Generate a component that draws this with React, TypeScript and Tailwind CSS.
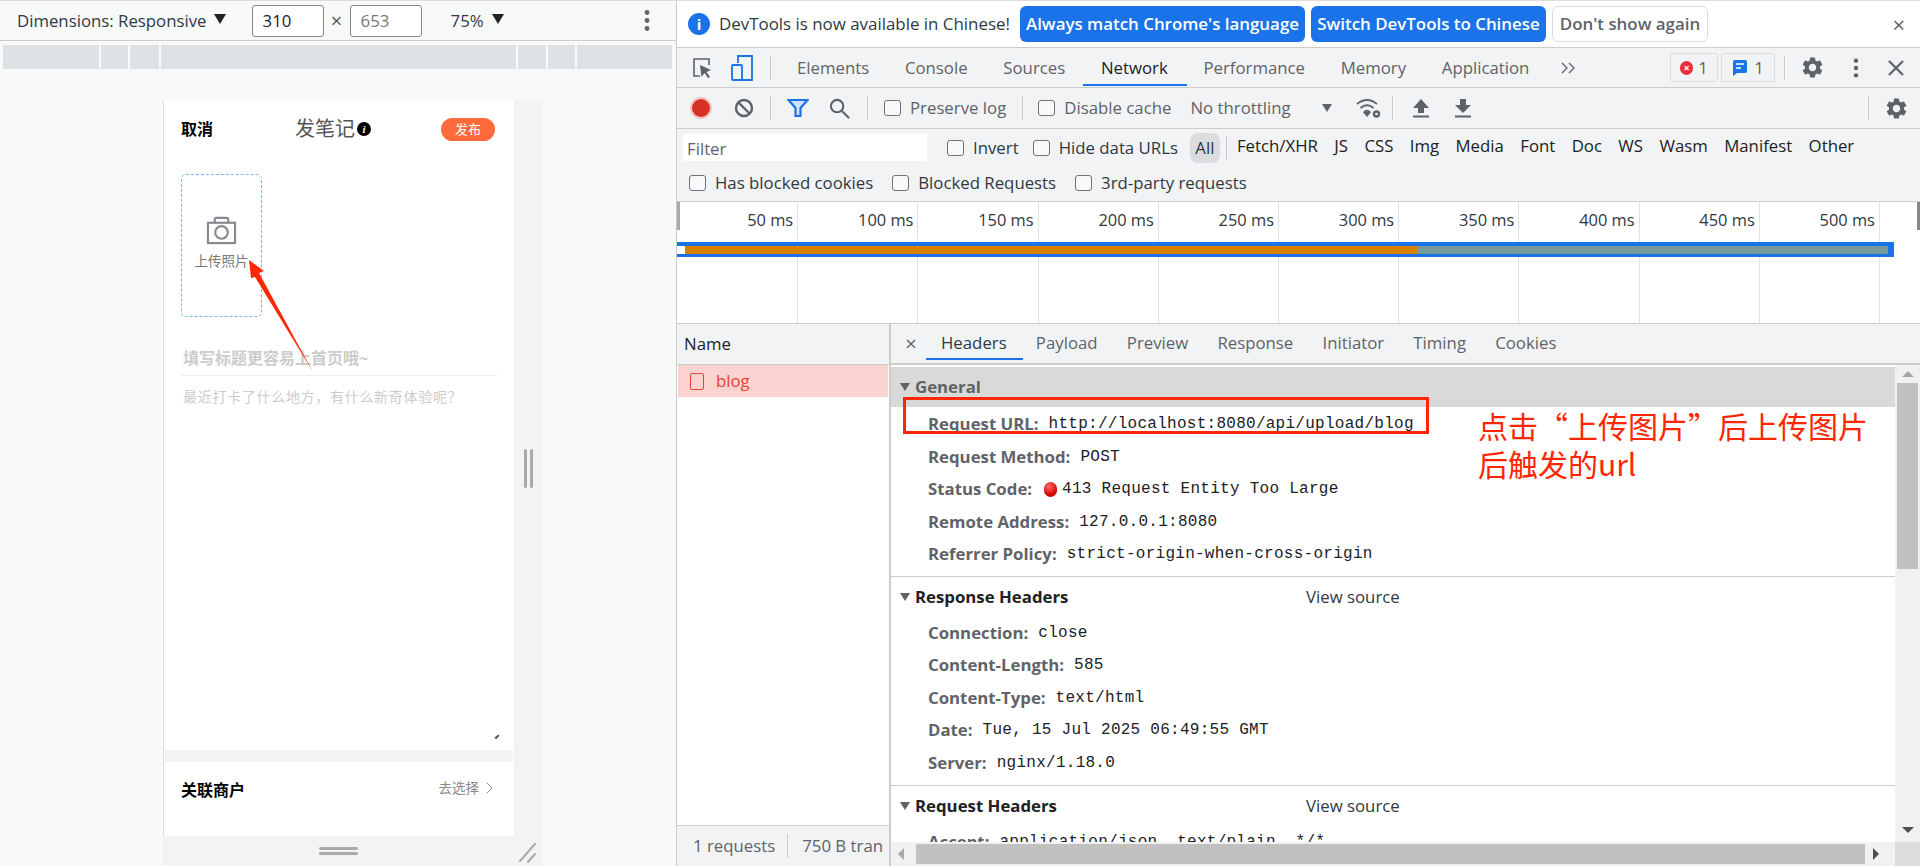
import React from "react";

const ui = "font-['Open_Sans','Noto_Sans_CJK_SC',sans-serif]";
const mono = "font-['Liberation_Mono',monospace]";
const gearPath =
  "M19.14 12.94c.04-.3.06-.61.06-.94 0-.32-.02-.64-.07-.94l2.03-1.58a.49.49 0 0 0 .12-.61l-1.92-3.32a.488.488 0 0 0-.59-.22l-2.39.96c-.5-.38-1.03-.7-1.62-.94l-.36-2.54a.484.484 0 0 0-.48-.41h-3.84c-.24 0-.43.17-.47.41l-.36 2.54c-.59.24-1.13.57-1.62.94l-2.39-.96c-.22-.08-.47 0-.59.22L2.74 8.87c-.12.21-.08.47.12.61l2.03 1.58c-.05.3-.09.63-.09.94s.02.64.07.94l-2.03 1.58a.49.49 0 0 0-.12.61l1.92 3.32c.12.22.37.29.59.22l2.39-.96c.5.38 1.03.7 1.62.94l.36 2.54c.05.24.24.41.48.41h3.84c.24 0 .44-.17.47-.41l.36-2.54c.59-.24 1.13-.56 1.62-.94l2.39.96c.22.08.47 0 .59-.22l1.92-3.32c.12-.22.07-.47-.12-.61l-2.01-1.58zM12 15.6c-1.98 0-3.6-1.62-3.6-3.6s1.62-3.6 3.6-3.6 3.6 1.62 3.6 3.6-1.62 3.6-3.6 3.6z";

function Gear({ className }: { className: string }) {
  return (
    <svg viewBox="0 0 24 24" className={className} fill="#5f6368">
      <path d={gearPath} />
    </svg>
  );
}

function Dots({ className }: { className: string }) {
  return (
    <svg viewBox="0 0 6 24" className={className} fill="#5f6368">
      <circle cx="3" cy="4" r="2.4" />
      <circle cx="3" cy="12" r="2.4" />
      <circle cx="3" cy="20" r="2.4" />
    </svg>
  );
}

function Check({ label, className = "" }: { label: string; className?: string }) {
  return (
    <span className={`flex items-center gap-[9px] ${className}`}>
      <span className="w-[17px] h-[16px] rounded-[3px] border-[1.5px] border-[#6e7175] bg-[#f8f9fa]" />
      <span>{label}</span>
    </span>
  );
}

function Sep({ className }: { className: string }) {
  return <span className={`w-px h-[24px] bg-[#ccc] ${className}`} />;
}

function Row({ name, value, status }: { name: string; value: string; status?: boolean }) {
  return (
    <div className="h-[32.5px] flex items-center pl-[37px] whitespace-nowrap">
      <span className="font-bold text-[#5f6368] -mt-[1px]">{name}</span>
      {status && (
        <span className="ml-[12px] w-[13px] h-[15px] rounded-full bg-[radial-gradient(circle_at_40%_30%,#ff6b6b,#d30000_65%)]" />
      )}
      <span className={`${mono} ${status ? "ml-[5px]" : "ml-[10px]"} text-[16px] tracking-[0.27px] text-[#202124]`}>
        {value}
      </span>
    </div>
  );
}

function SectionHead({ title, source }: { title: string; source?: boolean }) {
  return (
    <div className="h-[40px] flex items-center pl-[9px] whitespace-nowrap">
      <span className="w-0 h-0 border-x-[5px] border-x-transparent border-t-[8px] border-t-[#5f6368]" />
      <span className="ml-[5px] w-[391px] font-bold text-[#202124]">{title}</span>
      {source && <span className="text-[#303942]">View source</span>}
    </div>
  );
}

const ticks = ["50 ms", "100 ms", "150 ms", "200 ms", "250 ms", "300 ms", "350 ms", "400 ms", "450 ms", "500 ms"];

function LeftPane() {
  return (
    <div className="w-[677px] shrink-0 h-full flex flex-col bg-[#f8f9f9] border-r border-[#ccc] border-t border-t-[#ddd] text-[#303942]">
      <div className="h-[40px] shrink-0 border-b border-[#ccc] flex items-center pl-[17px] text-[16.8px]">
        <span className="whitespace-nowrap">Dimensions: Responsive</span>
        <span className="ml-[7px] w-0 h-0 border-x-[6px] border-x-transparent border-t-[10px] border-t-[#222] mb-[3px]" />
        <span className="ml-[26px] w-[72px] h-[32px] border border-[#888] rounded-[3px] bg-white pl-[10px] leading-[30px] text-[#222]">
          310
        </span>
        <span className="w-[26px] text-center text-[20px] text-[#555]">×</span>
        <span className="w-[72px] h-[32px] border border-[#888] rounded-[3px] bg-white pl-[10px] leading-[30px] text-[#777]">
          653
        </span>
        <span className="ml-[29px]">75%</span>
        <span className="ml-[8px] w-0 h-0 border-x-[6px] border-x-transparent border-t-[10px] border-t-[#222] mb-[3px]" />
        <Dots className="ml-[140px] w-[6px] h-[25px]" />
      </div>
      <div className="mt-[4px] ml-[3px] w-[669px] h-[24px] shrink-0 flex gap-[2px]">
        <span className="w-[96px] bg-[#dee1e6]" />
        <span className="w-[27px] bg-[#dee1e6]" />
        <span className="w-[29px] bg-[#dee1e6]" />
        <span className="w-[355px] bg-[#dee1e6]" />
        <span className="w-[28px] bg-[#dee1e6]" />
        <span className="w-[27px] bg-[#dee1e6]" />
        <span className="flex-1 bg-[#dee1e6]" />
      </div>
      <div className="mt-[32px] ml-[163px] w-[379px] flex-1 flex flex-col min-h-0">
        <div className="flex-1 flex min-h-0">
          <div className="w-[351px] bg-white border-l border-[#ddd] flex flex-col">
            <div className="flex items-center h-[54px] pl-[17px] pr-[19px] mt-[1px]">
              <span className="w-[114px] font-bold text-[16px] text-black">取消</span>
              <span className="text-[20px] text-[#555] whitespace-nowrap font-['Liberation_Serif','Noto_Sans_CJK_SC',serif]">
                发笔记
              </span>
              <span className="ml-[2px] w-[14px] h-[14px] rounded-full bg-black text-white text-[11px] leading-[14px] text-center font-bold italic font-['Liberation_Serif',serif]">
                i
              </span>
              <span className="ml-auto w-[54px] h-[23px] rounded-full bg-[#ff6a3a] text-white text-[13px] leading-[23px] text-center">
                发布
              </span>
            </div>
            <div className="ml-[17px] mt-[18px] w-[81px] h-[143px] border border-dashed border-[#76b6f5] rounded-[5px] flex flex-col items-center pt-[41px]">
              <svg viewBox="0 0 32 30" className="w-[31px] h-[29px]" fill="none" stroke="#85888f" strokeWidth="2.2">
                <rect x="2" y="7" width="28" height="21" />
                <path d="M9 7V3.5Q9 2 11 2H21Q23 2 23 3.5V7" />
                <circle cx="16" cy="17" r="6.5" />
              </svg>
              <span className="mt-[6px] text-[13.5px] text-[#777] whitespace-nowrap">上传照片</span>
            </div>
            <div className="mt-[31px] mx-[17px] h-[28px] border-b border-[#eee] pl-[2px] font-bold text-[16px] leading-[20px] text-[#ccc] whitespace-nowrap">
              填写标题更容易上首页哦~
            </div>
            <div className="mt-[10px] pl-[19px] text-[14px] leading-[22px] text-[#ccc] whitespace-nowrap tracking-[0.7px]">
              最近打卡了什么地方，有什么新奇体验呢？
            </div>
            <div className="flex-1 relative">
              <span className="absolute right-[14px] bottom-[10px] text-[7px] leading-none text-[#444]">⬋</span>
            </div>
            <div className="ml-[1px] mr-[1px] h-[12px] bg-[#f3f3f3]" />
            <div className="h-[74px] flex items-center pl-[17px] pr-[21px] pb-[18px]">
              <span className="font-bold text-[16px] text-black">关联商户</span>
              <span className="ml-auto text-[13.5px] text-[#888] mb-[4px]">去选择</span>
              <svg viewBox="0 0 8 14" className="ml-[7px] w-[7px] h-[12px] mb-[4px]" fill="none" stroke="#888" strokeWidth="1.1">
                <path d="M1 1l6 6-6 6" />
              </svg>
            </div>
          </div>
          <div className="flex-1 bg-[#f1f3f4] flex items-center justify-center gap-[3px]">
            <span className="w-[3px] h-[39px] rounded-full bg-[#aaa]" />
            <span className="w-[3px] h-[39px] rounded-full bg-[#aaa]" />
          </div>
        </div>
        <div className="relative h-[30px] bg-[#f1f3f4] flex flex-col items-center pr-[28px] justify-center gap-[2px] shrink-0">
          <span className="w-[39px] h-[3px] rounded-full bg-[#aaa]" />
          <span className="w-[39px] h-[3px] rounded-full bg-[#aaa]" />
          <svg viewBox="0 0 18 20" className="absolute right-[5px] top-[7px] w-[18px] h-[20px]" stroke="#aaa" strokeWidth="2" strokeLinecap="round">
            <path d="M1 18L16 1M9 19L16 11" />
          </svg>
        </div>
      </div>
    </div>
  );
}

function InfoBar() {
  return (
    <div className="h-[48px] shrink-0 bg-white border-t border-[#ddd] border-b border-b-[#ccc] flex items-center whitespace-nowrap text-[16.9px] text-[#303942]">
      <span className="ml-[11px] w-[22px] h-[22px] rounded-full bg-[#1a73e8] text-white text-[15px] leading-[22px] text-center font-bold">
        i
      </span>
      <span className="ml-[9px] w-[301px]">DevTools is now available in Chinese!</span>
      <span className="w-[285px] h-[36px] rounded-[6px] bg-[#1a73e8] text-white font-semibold leading-[36px] text-center">
        Always match Chrome's language
      </span>
      <span className="ml-[6px] w-[235px] h-[36px] rounded-[6px] bg-[#1a73e8] text-white font-semibold leading-[36px] text-center">
        Switch DevTools to Chinese
      </span>
      <span className="ml-[6px] w-[156px] h-[36px] rounded-[6px] border border-[#dadce0] font-semibold text-[#5f6368] leading-[34px] text-center">
        Don't show again
      </span>
      <span className="ml-auto mr-[15px] text-[22px] leading-none text-[#5f6368]">×</span>
    </div>
  );
}

function TabBar() {
  return (
    <div className="h-[40px] shrink-0 border-b border-[#ccc] flex items-center whitespace-nowrap text-[16.8px] text-[#5f6368]">
      <svg viewBox="0 0 20 22" className="ml-[15px] w-[20px] h-[22px]" fill="none">
        <path d="M8 19H2V2H17V8" stroke="#5f6368" strokeWidth="1.6" />
        <path d="M8 8L19 13L14.5 15L18 20L16 21L12.5 16L9.5 20Z" fill="#5f6368" />
      </svg>
      <svg viewBox="0 0 24 28" className="ml-[18px] w-[24px] h-[28px]" fill="none" stroke="#1a73e8" strokeWidth="1.8">
        <path d="M8 9V2H22V26H12" />
        <rect x="2" y="11" width="10" height="15" rx="1" />
      </svg>
      <Sep className="ml-[16px]" />
      <div className="ml-[26px] flex gap-[35.7px] h-full items-center">
        <span>Elements</span>
        <span>Console</span>
        <span>Sources</span>
        <span className="relative text-[#202124]">
          Network
          <span className="absolute -left-[18px] -right-[19px] top-[29px] h-[2px] bg-[#1a73e8]" />
        </span>
        <span>Performance</span>
        <span>Memory</span>
        <span>Application</span>
      </div>
      <svg viewBox="0 0 14 12" className="ml-[32px] w-[14px] h-[12px]" fill="none" stroke="#5f6368" strokeWidth="1.3">
        <path d="M1 1l5 5-5 5M8 1l5 5-5 5" />
      </svg>
      <span className="ml-auto flex items-center h-[29px] w-[48px] justify-center gap-[5px] border border-[#dadce0] rounded-[3px]">
        <span className="w-[13px] h-[14px] rounded-full bg-[#e8303a] text-white text-[11px] leading-[13px] text-center font-bold">×</span>
        1
      </span>
      <span className="ml-[3px] flex items-center h-[29px] w-[54px] justify-center gap-[6px] border border-[#dadce0] rounded-[3px]">
        <svg viewBox="0 0 16 18" className="w-[16px] h-[18px]">
          <path d="M1 3Q1 1 3 1H13Q15 1 15 3V12Q15 14 13 14H5L1 17Z" fill="#1a73e8" />
          <path d="M4 5H12M4 9H9" stroke="#fff" strokeWidth="1.6" />
        </svg>
        1
      </span>
      <Sep className="ml-[9px]" />
      <Gear className="ml-[15px] w-[25px] h-[25px]" />
      <Dots className="ml-[28px] w-[6px] h-[22px]" />
      <svg viewBox="0 0 16 16" className="ml-[29px] mr-[16px] w-[16px] h-[16px]" stroke="#5f6368" strokeWidth="2.2">
        <path d="M1 1l14 14M15 1L1 15" />
      </svg>
    </div>
  );
}

function ActionBar() {
  return (
    <div className="h-[41px] shrink-0 border-b border-[#ccc] flex items-center whitespace-nowrap text-[16.8px] text-[#5f6368]">
      <span className="ml-[15px] w-[18px] h-[18px] rounded-full bg-[#d93025] shadow-[0_0_0_2px_#f3c6c3]" />
      <svg viewBox="0 0 20 20" className="ml-[24px] w-[20px] h-[20px]" fill="none" stroke="#5f6368" strokeWidth="2.4">
        <circle cx="10" cy="10" r="8" />
        <path d="M4.5 4.5l11 11" />
      </svg>
      <Sep className="ml-[16px]" />
      <svg viewBox="0 0 22 20" className="ml-[16px] w-[22px] h-[20px]" fill="#cfe3fb" stroke="#1a73e8" strokeWidth="2.2">
        <path d="M1.5 2H20.5L13.5 10V18H8.5V10Z" />
      </svg>
      <svg viewBox="0 0 22 22" className="ml-[20px] w-[21px] h-[21px]" fill="none" stroke="#5f6368" strokeWidth="2.2">
        <circle cx="8.5" cy="8.5" r="6.5" />
        <path d="M13.5 13.5L21 21" />
      </svg>
      <Sep className="ml-[17px]" />
      <Check label="Preserve log" className="ml-[16px]" />
      <Sep className="ml-[16px]" />
      <Check label="Disable cache" className="ml-[15px]" />
      <span className="ml-[19px]">No throttling</span>
      <span className="ml-[31px] w-0 h-0 border-x-[5px] border-x-transparent border-t-[8px] border-t-[#5f6368]" />
      <svg viewBox="0 0 26 22" className="ml-[24px] w-[26px] h-[22px]" fill="none" stroke="#5f6368" strokeWidth="2">
        <path d="M1 7Q11 -1 21 7M4.5 11Q11 5.5 17.5 11M8 15Q11 12.5 14 15" />
        <path d="M9 16H13L11 18.5Z" fill="#5f6368" />
        <circle cx="20.5" cy="17" r="2.5" strokeWidth="2.4" />
      </svg>
      <Sep className="ml-[10px]" />
      <svg viewBox="0 0 18 20" className="ml-[19px] w-[18px] h-[20px]" fill="#5f6368">
        <path d="M9 1L17 10H12V15H6V10H1ZM1 17.5H17V19.5H1Z" />
      </svg>
      <svg viewBox="0 0 18 20" className="ml-[24px] w-[18px] h-[20px]" fill="#5f6368">
        <path d="M6 1H12V7H17L9 15L1 7H6ZM1 17.5H17V19.5H1Z" />
      </svg>
      <Sep className="ml-auto" />
      <Gear className="ml-[15px] mr-[11px] w-[25px] h-[25px]" />
    </div>
  );
}

function FilterBar() {
  return (
    <div className="h-[73px] shrink-0 border-b border-[#ccc] text-[16.8px] whitespace-nowrap text-[#303942]">
      <div className="h-[36px] flex items-center pt-[1px]">
        <span className="ml-[6px] w-[244px] h-[27px] bg-white pl-[4px] leading-[29px] text-[#5f6368]">Filter</span>
        <Check label="Invert" className="ml-[20px]" />
        <Check label="Hide data URLs" className="ml-[14px]" />
        <span className="ml-[12px] w-[30px] h-[30px] rounded-[8px] bg-[#dadce0] leading-[29px] text-center">All</span>
        <Sep className="ml-[6px]" />
        <div className="ml-[10px] flex gap-[16.4px] text-[#202124] -mt-[3px]">
          <span>Fetch/XHR</span>
          <span>JS</span>
          <span>CSS</span>
          <span>Img</span>
          <span>Media</span>
          <span>Font</span>
          <span>Doc</span>
          <span>WS</span>
          <span>Wasm</span>
          <span>Manifest</span>
          <span>Other</span>
        </div>
      </div>
      <div className="h-[36px] flex items-center pl-[12px] gap-[19px]">
        <Check label="Has blocked cookies" />
        <Check label="Blocked Requests" />
        <Check label="3rd-party requests" />
      </div>
    </div>
  );
}

function Timeline() {
  return (
    <div className="h-[122px] shrink-0 bg-white border-b border-[#ccc] flex flex-col relative">
      <span className="absolute left-0 top-0 w-[3px] h-[28px] bg-[#aaa]" />
      <span className="absolute right-0 top-0 w-[3px] h-[28px] bg-[#888]" />
      <div className="h-[40px] flex pl-px text-[16.4px] text-[#303942] whitespace-nowrap">
        {ticks.map((t) => (
          <div key={t} className="w-[120.2px] shrink-0 border-r border-[#dfe1e5] text-right pr-[4px] pt-[6px]">
            {t}
          </div>
        ))}
      </div>
      <div className="h-[15px] w-[1217px] bg-[#1a73e8] flex items-center pr-[6px]">
        <span className="w-[8px] h-[8px] bg-white" />
        <span className="w-[733px] h-[8px] bg-[#d98000]" />
        <span className="flex-1 h-[8px] bg-[#76999a]" />
      </div>
      <div className="flex-1 flex pl-px">
        {ticks.map((t) => (
          <div key={t} className="w-[120.2px] shrink-0 border-r border-[#dfe1e5]" />
        ))}
      </div>
    </div>
  );
}

function RequestList() {
  return (
    <div className="w-[214px] shrink-0 border-r-2 border-[#ccc] flex flex-col text-[16.8px]">
      <div className="h-[41px] shrink-0 bg-[#f1f3f4] border-b border-[#ccc] pl-[7px] flex items-center text-[#202124]">Name</div>
      <div className="h-[32px] shrink-0 mx-px bg-[#fad2cf] flex items-center pl-[12px] text-[#ea4335]">
        <span className="w-[14px] h-[17px] border-[1.5px] border-[#ea4335] rounded-[2px]" />
        <span className="ml-[12px]">blog</span>
      </div>
      <div className="flex-1" />
      <div className="h-[41px] shrink-0 bg-[#f1f3f4] border-t border-[#ccc] flex items-center pl-[16px] text-[#5f6368] whitespace-nowrap overflow-hidden">
        <span>1 requests</span>
        <Sep className="ml-[12px] shrink-0" />
        <span className="ml-[14px]">750 B tran</span>
      </div>
    </div>
  );
}

function HeadersPanel() {
  return (
    <div className="flex-1 min-w-0 flex flex-col text-[16.8px]">
      <div className="h-[41px] shrink-0 bg-[#f1f3f4] border-b-2 border-[#ccc] flex items-center whitespace-nowrap text-[#5f6368]">
        <span className="ml-[14px] w-[12px] text-center text-[20px] leading-none">×</span>
        <div className="ml-[24px] flex gap-[29.2px] -mt-[1px]">
          <span className="relative text-[#303942]">
            Headers
            <span className="absolute -left-[15px] -right-[16px] top-[28px] h-[2px] bg-[#1a73e8]" />
          </span>
          <span>Payload</span>
          <span>Preview</span>
          <span>Response</span>
          <span>Initiator</span>
          <span>Timing</span>
          <span>Cookies</span>
        </div>
      </div>
      <div className="flex-1 min-h-0 flex flex-col">
        <div className="flex-1 min-h-0 flex pt-[2px]">
          <div className="w-[1004px] shrink-0 overflow-hidden">
            <div className="h-[40px] bg-[#d9d9d9] flex items-center pl-[9px] font-bold text-[#5f6368]">
              <span className="w-0 h-0 border-x-[5px] border-x-transparent border-t-[8px] border-t-[#5f6368]" />
              <span className="ml-[5px]">General</span>
            </div>
            <div className="pb-[5px] pt-[1px] border-b border-[#ccc]">
              <Row name="Request URL:" value="http://localhost:8080/api/upload/blog" />
              <Row name="Request Method:" value="POST" />
              <Row name="Status Code:" value="413 Request Entity Too Large" status />
              <Row name="Remote Address:" value="127.0.0.1:8080" />
              <Row name="Referrer Policy:" value="strict-origin-when-cross-origin" />
            </div>
            <div className="pb-[6px] border-b border-[#ccc]">
              <SectionHead title="Response Headers" source />
              <Row name="Connection:" value="close" />
              <Row name="Content-Length:" value="585" />
              <Row name="Content-Type:" value="text/html" />
              <Row name="Date:" value="Tue, 15 Jul 2025 06:49:55 GMT" />
              <Row name="Server:" value="nginx/1.18.0" />
            </div>
            <SectionHead title="Request Headers" source />
            <Row name="Accept:" value="application/json, text/plain, */*" />
          </div>
          <div className="flex-1 bg-[#f1f1f1] flex flex-col items-center px-[2px] -mt-[2px]">
            <span className="mt-[6px] w-0 h-0 border-x-[6px] border-x-transparent border-b-[6px] border-b-[#a8a8a8]" />
            <span className="mt-[6px] w-full h-[186px] bg-[#c1c1c1]" />
            <span className="mt-auto mb-[9px] w-0 h-0 border-x-[6px] border-x-transparent border-t-[6px] border-t-[#505050]" />
          </div>
        </div>
        <div className="h-[24px] shrink-0 flex bg-[#f1f1f1]">
          <div className="w-[1004px] flex items-center pl-[7px] pr-[30px] py-[2px]">
            <span className="w-0 h-0 border-y-[6px] border-y-transparent border-r-[6px] border-r-[#a8a8a8]" />
            <span className="ml-[12px] flex-1 h-full bg-[#c1c1c1]" />
          </div>
          <span className="-ml-[22px] self-center w-0 h-0 border-y-[6px] border-y-transparent border-l-[6px] border-l-[#505050]" />
          <span className="ml-[16px] flex-1 bg-[#dcdcdc]" />
        </div>
      </div>
    </div>
  );
}

export default function App() {
  return (
    <div className={`relative w-[1920px] h-[866px] overflow-hidden flex bg-white ${ui}`}>
      <LeftPane />
      <div className="flex-1 min-w-0 h-full flex flex-col bg-[#f1f3f4]">
        <InfoBar />
        <TabBar />
        <ActionBar />
        <FilterBar />
        <Timeline />
        <div className="flex-1 min-h-0 flex bg-white">
          <RequestList />
          <HeadersPanel />
        </div>
      </div>

      {/* annotations drawn over the screenshot */}
      <svg className="absolute left-[240px] top-[255px] w-[80px] h-[120px]" viewBox="240 255 80 120" fill="#ff2600">
        <polygon points="249,260 264,271 259,273 313,372 255,277 251,278" />
      </svg>
      <div className="absolute left-[903px] top-[397px] w-[526px] h-[37px] border-[3px] border-[#ff2600]" />
      <div className="absolute left-[1478px] top-[406px] w-[400px] text-[30px] leading-[38px] text-[#ff2600] font-['Noto_Sans_CJK_SC',sans-serif]">
        点击“上传图片”后上传图片
        <br />
        后触发的url
      </div>
    </div>
  );
}
